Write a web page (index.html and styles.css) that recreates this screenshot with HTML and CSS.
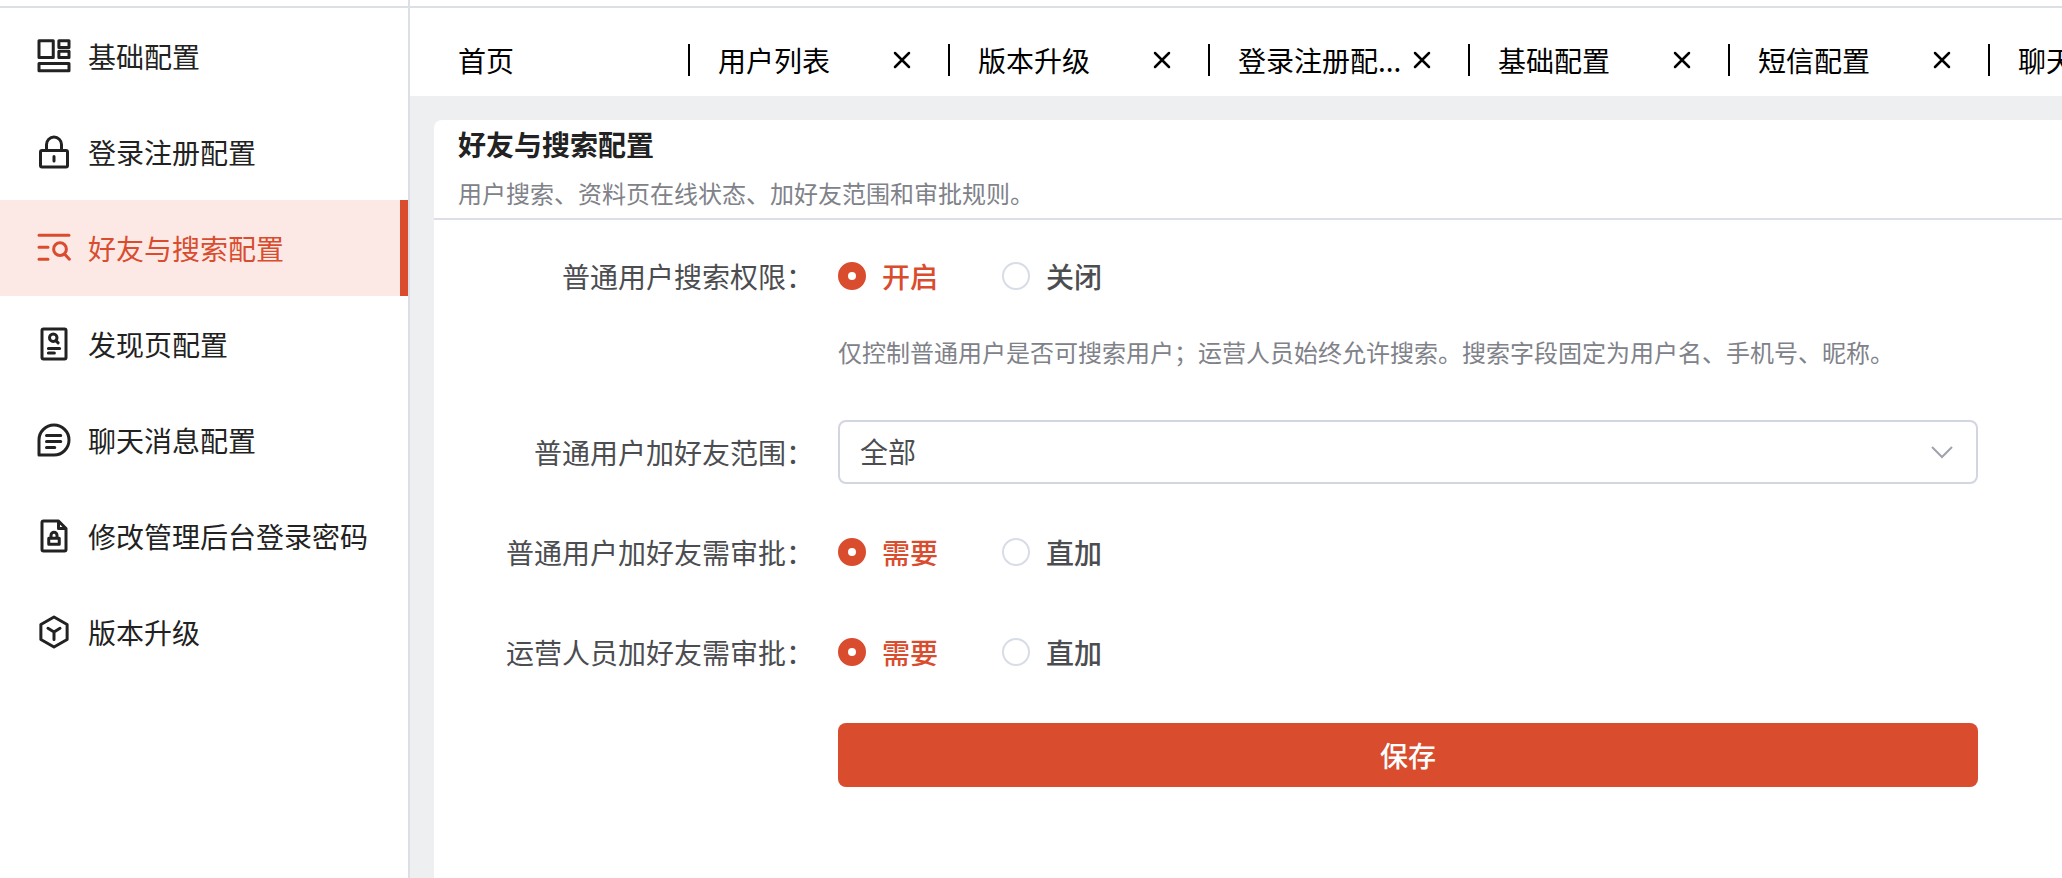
FILE: index.html
```html
<!DOCTYPE html>
<html lang="zh-CN">
<head>
  <meta charset="UTF-8">
  <meta name="viewport" content="width=device-width, initial-scale=1.0">
  <title>好友与搜索配置</title>
  <link rel="stylesheet" href="styles.css">
</head>
<body>
  <aside class="sidebar">
    <div class="topbar"></div>
    <nav class="menu">
      <a class="menu-item" href="#">
        <svg class="icon" viewBox="0 0 48 48"><rect x="4" y="3.5" width="19" height="22.5"/><rect x="30.5" y="3.5" width="13.5" height="9"/><rect x="30.5" y="17.5" width="13.5" height="8.5"/><rect x="4" y="34" width="40" height="9.5"/></svg>
        <span>基础配置</span>
      </a>
      <a class="menu-item" href="#">
        <svg class="icon" viewBox="0 0 48 48"><rect x="6" y="22" width="36" height="22" rx="2"/><path d="M14 22v-8c0-5.5 4.5-10 10-10s10 4.5 10 10v8M24 30v6"/></svg>
        <span>登录注册配置</span>
      </a>
      <a class="menu-item active" href="#">
        <svg class="icon" viewBox="0 0 48 48"><path d="M4 7h40M4 23h12M4 39h12M38 32l6.500 7"/><circle cx="32" cy="25.500" r="8.500"/></svg>
        <span>好友与搜索配置</span>
      </a>
      <a class="menu-item" href="#">
        <svg class="icon" viewBox="0 0 48 48"><rect x="8" y="4" width="32" height="40" rx="2"/><circle cx="23" cy="15.500" r="5"/><path d="M26.500 19.500l3 3M16.500 30h15M16.500 36h8"/></svg>
        <span>发现页配置</span>
      </a>
      <a class="menu-item" href="#">
        <svg class="icon" viewBox="0 0 48 48"><path d="M44 24c0 11-9 20-20 20H4V24C4 13 13 4 24 4s20 9 20 20zM14 18h19M14 26h19M14 34h11"/></svg>
        <span>聊天消息配置</span>
      </a>
      <a class="menu-item" href="#">
        <svg class="icon" viewBox="0 0 48 48"><path d="M40 14v28a2 2 0 0 1-2 2H10a2 2 0 0 1-2-2V6a2 2 0 0 1 2-2h20zM30 4v10h10"/><rect x="17" y="27" width="14" height="8"/><path d="M20 26v-3a4 4 0 0 1 8 0v3"/></svg>
        <span>修改管理后台登录密码</span>
      </a>
      <a class="menu-item" href="#">
        <svg class="icon" viewBox="0 0 48 48"><path d="M24 4l17.500 10v20L24 44 6.500 34V14zM16 19l8 5 8-5M24 24v10"/></svg>
        <span>版本升级</span>
      </a>
    </nav>
  </aside>

  <main class="main">
    <div class="topbar"></div>
    <div class="tabs">
      <div class="tab"><span class="tab-name">首页</span></div>
      <div class="tab">
        <span class="tab-name">用户列表</span>
        <button class="tab-close" type="button" aria-label="关闭"><svg viewBox="0 0 28 28"><path d="M7 7l14 14M21 7L7 21"/></svg></button>
      </div>
      <div class="tab">
        <span class="tab-name">版本升级</span>
        <button class="tab-close" type="button" aria-label="关闭"><svg viewBox="0 0 28 28"><path d="M7 7l14 14M21 7L7 21"/></svg></button>
      </div>
      <div class="tab">
        <span class="tab-name">登录注册配...</span>
        <button class="tab-close" type="button" aria-label="关闭"><svg viewBox="0 0 28 28"><path d="M7 7l14 14M21 7L7 21"/></svg></button>
      </div>
      <div class="tab">
        <span class="tab-name">基础配置</span>
        <button class="tab-close" type="button" aria-label="关闭"><svg viewBox="0 0 28 28"><path d="M7 7l14 14M21 7L7 21"/></svg></button>
      </div>
      <div class="tab">
        <span class="tab-name">短信配置</span>
        <button class="tab-close" type="button" aria-label="关闭"><svg viewBox="0 0 28 28"><path d="M7 7l14 14M21 7L7 21"/></svg></button>
      </div>
      <div class="tab"><span class="tab-name">聊天</span></div>
    </div>

    <section class="card">
      <header class="card-header">
        <h1>好友与搜索配置</h1>
        <p>用户搜索、资料页在线状态、加好友范围和审批规则。</p>
      </header>

      <form class="form">
        <div class="row" role="radiogroup" aria-labelledby="searchLabel">
          <span class="label" id="searchLabel">普通用户搜索权限：</span>
          <div class="control radios">
            <label class="radio"><input type="radio" name="search" checked><span>开启</span></label>
            <label class="radio"><input type="radio" name="search"><span>关闭</span></label>
          </div>
          <p class="help">仅控制普通用户是否可搜索用户；运营人员始终允许搜索。搜索字段固定为用户名、手机号、昵称。</p>
        </div>

        <div class="row">
          <label class="label" for="scope">普通用户加好友范围：</label>
          <div class="control select-box">
            <select id="scope">
              <option>全部</option>
            </select>
            <svg class="arrow" viewBox="0 0 28 28"><path d="M4 9l10 10L24 9"/></svg>
          </div>
        </div>

        <div class="row" role="radiogroup" aria-labelledby="userLabel">
          <span class="label" id="userLabel">普通用户加好友需审批：</span>
          <div class="control radios">
            <label class="radio"><input type="radio" name="user" checked><span>需要</span></label>
            <label class="radio"><input type="radio" name="user"><span>直加</span></label>
          </div>
        </div>

        <div class="row" role="radiogroup" aria-labelledby="staffLabel">
          <span class="label" id="staffLabel">运营人员加好友需审批：</span>
          <div class="control radios">
            <label class="radio"><input type="radio" name="staff" checked><span>需要</span></label>
            <label class="radio"><input type="radio" name="staff"><span>直加</span></label>
          </div>
        </div>

        <div class="row">
          <button class="save" type="submit">保存</button>
        </div>
      </form>
    </section>
  </main>
</body>
</html>
```
FILE: styles.css
```css
* {
  box-sizing: border-box;
}
body {
  margin: 0;
  min-height: 100vh;
  display: flex;
  background: #eeeff1;
  font-family: "Noto Sans CJK SC", sans-serif;
  font-size: 28px;
  line-height: 40px;
}
button, select {
  font: inherit;
}

/* sidebar */
.sidebar {
  flex: 0 0 410px;
  background: #fff;
  border-right: 2px solid #dcdfe6;
}
.topbar {
  height: 8px;
  background: #fff;
  border-bottom: 2px solid #dcdfe6;
}
.menu-item {
  display: flex;
  align-items: center;
  gap: 16px;
  height: 96px;
  padding-left: 36px;
  color: #222;
  text-decoration: none;
  white-space: nowrap;
}
.menu-item.active {
  background: #fce9e6;
  color: #d94c2e;
  border-right: 8px solid #d94c2e;
}
.icon {
  width: 36px;
  height: 36px;
  fill: none;
  stroke: currentColor;
  stroke-width: 4;
  stroke-linecap: round;
  stroke-linejoin: round;
}

/* tabs */
.main {
  flex: 1;
  min-width: 0;
  display: flex;
  flex-direction: column;
}
.tabs {
  display: flex;
  align-items: center;
  height: 88px;
  padding: 16px 0 0 20px;
  background: #fff;
  overflow: hidden;
}
.tab {
  flex: 0 0 260px;
  display: flex;
  align-items: center;
  height: 32px;
  padding: 0 32px 0 28px;
  border-right: 2px solid #000;
  color: #000;
}
.tab-name {
  flex: 1;
  white-space: nowrap;
}
.tab-close {
  display: flex;
  padding: 0;
  border: none;
  background: none;
  cursor: pointer;
}
.tab-close svg {
  width: 28px;
  height: 28px;
  fill: none;
  stroke: #000;
  stroke-width: 2.5;
  stroke-linecap: round;
}

/* card */
.card {
  flex: 1;
  margin: 24px 0 0 24px;
  background: #fff;
  border-top-left-radius: 8px;
}
.card-header {
  padding: 0 24px;
  border-bottom: 2px solid #dcdfe6;
}
.card-header h1 {
  margin: 0;
  color: #222;
  font-size: 28px;
  font-weight: 700;
  line-height: 48px;
}
.card-header p {
  margin: 0;
  color: #808289;
  font-size: 24px;
  line-height: 50px;
}

/* form */
.form {
  display: flex;
  flex-direction: column;
  gap: 36px;
  padding: 24px 84px 36px 24px;
}
.row {
  display: grid;
  grid-template-columns: 356px 1fr;
  column-gap: 24px;
  row-gap: 12px;
  align-items: center;
  color: #4c4d50;
}
.label {
  text-align: right;
  white-space: nowrap;
}
.control {
  height: 64px;
}
.radios {
  display: flex;
  align-items: center;
  gap: 64px;
}
.radio {
  display: flex;
  align-items: center;
  gap: 16px;
  font-weight: 500;
  cursor: pointer;
}
.radio input {
  appearance: none;
  width: 28px;
  height: 28px;
  margin: 0;
  border: 2px solid #d8dce6;
  border-radius: 50%;
  background: #fff;
}
.radio input:checked {
  border: 10px solid #d94c2e;
}
.radio input:checked + span {
  color: #d94c2e;
}
.help {
  grid-column: 2;
  margin: 0;
  color: #808289;
  font-size: 24px;
  line-height: 64px;
}
.select-box {
  position: relative;
}
.select-box select {
  appearance: none;
  width: 100%;
  height: 64px;
  padding: 0 60px 2px 20px;
  border: 2px solid #d2d6e0;
  border-radius: 8px;
  background: #fff;
  color: #4c4d50;
}
.arrow {
  position: absolute;
  top: 18px;
  right: 22px;
  width: 28px;
  height: 28px;
  fill: none;
  stroke: #a0a2ac;
  stroke-width: 2;
  pointer-events: none;
}
.save {
  grid-column: 2;
  height: 64px;
  margin-top: 3px;
  padding-bottom: 2px;
  border: none;
  border-radius: 8px;
  background: #d94c2e;
  color: #fff;
  font-weight: 500;
  cursor: pointer;
}
```
